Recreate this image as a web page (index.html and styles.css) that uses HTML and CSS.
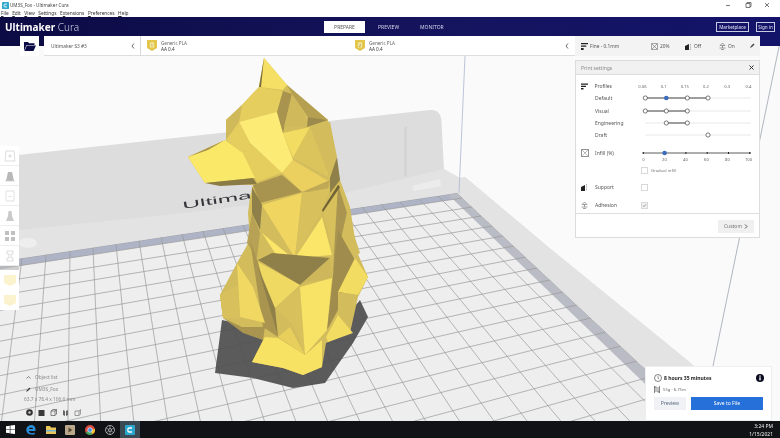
FILE: index.html
```html
<!DOCTYPE html>
<html lang="en">
<head>
<meta charset="utf-8">
<title>UM3S_Fox - Ultimaker Cura</title>
<link rel="stylesheet" href="styles.css">
</head>
<body>
<div class="page">
  <div class="titlebar">
    <svg class="app-ic" viewBox="0 0 8 8"><rect width="8" height="8" rx="1" fill="#2fa8c9"/><path d="M5.6 2.4H3.2Q2.3 2.4 2.3 4T3.2 5.6H5.6" fill="none" stroke="#fff" stroke-width="1.1"/></svg>
    <span class="title-text">UM3S_Fox - Ultimaker Cura</span>
    <div class="winctl">
      <svg viewBox="0 0 46 8" class="winctl-ic"><path d="M0 4.5H4M20 2.5H24V6.5H20ZM21 2.5V1.5H25V5.5H24M39 2L43 6M43 2L39 6" fill="none" stroke="#555" stroke-width=".8"/></svg>
    </div>
  </div>
  <div class="menubar">
    <span><u>F</u>ile</span><span><u>E</u>dit</span><span><u>V</u>iew</span><span><u>S</u>ettings</span><span>E<u>x</u>tensions</span><span><u>P</u>references</span><span><u>H</u>elp</span>
  </div>

  <div class="main">
    <svg class="scene" viewBox="0 17 780 404" preserveAspectRatio="none">
      <defs>
        <clipPath id="bedclip"><path d="M0 261.5L457 193L721 440L0 440Z"/></clipPath>
      </defs>
      <rect x="0" y="17" width="780" height="404" fill="#fafafa"/>
      <path d="M0 157L430 110Q441 109 441.500 122L444 170L460 178L465 177L547 246L687 360L780 440L0 440Z" fill="#dddddd"/>
      <path d="M0 232L185 213L345 193L444 169L460 178L465 177L547 246L687 360L780 440L0 440Z" fill="#e3e3e3"/>
      <path d="M404 127L407 127L407 176L404 176Z" fill="#d4d4d4"/>
      <path d="M412 186L440 179L441 186L414 191Z" fill="#ececec"/>
      <ellipse cx="28" cy="243" rx="9" ry="5" fill="#eeeeee"/>
      <text class="brand" x="183" y="209" textLength="104" lengthAdjust="spacingAndGlyphs" transform="rotate(-9 183 209)">Ultimaker</text>
      <path d="M0 261.500L457 193L721 440L0 440Z" fill="#eeeeee"/>
      <g clip-path="url(#bedclip)">
        <path d="M0 261.500L457 193L462 198L0 268.700Z" fill="#aeb4c6"/>
        <path d="M457 193L721 440L703.500 440L448 194.500Z" fill="#b9bcc4"/>
        <path fill="none" stroke="#9a9a9a" stroke-width=".7" d="M22 258L-.8 440M46 254.500L33.200 440M70 251L67.700 440M93 247.500L101.400 440M116 244L135.600 440M139 240.500L170.500 440M161 237L204.400 440M182 234L237.200 440M203 231L270.600 440M223 228L302.900 440M243 225L335.700 440M263 222L369 440M283 219L402.800 440M303 216L437.100 440M323 213L472 440M343 210L507.600 440M362 207L541.700 440M381 204L576.500 440M400 202L611.900 440M419 199L647.700 440M438 196L684 440M457 193L721 440"/>
        <path fill="none" stroke="#9a9a9a" stroke-width=".7" d="M0 261.500L457 193M0 268.700L462 198M0 282L472 207M0 295.300L481 216M0 310.400L492 226M0 325.700L503 236M0 341.200L514 246M0 358.400L526 257M0 375.700L537 268M0 395L550 280M0 414.600L563 292M0 436.100L577 305M0 458L591 318M0 482L606 332M0 506.500L621 346M0 533L637 361M0 560.300L653 376M0 589.900L670 392M0 622L688 409M0 655.300L707 426"/>
      </g>
      <path d="M465 56L459 193" fill="none" stroke="#a9b8d0" stroke-width=".8"/>
      <path d="M780 42L713 366" fill="none" stroke="#8f98a8" stroke-width=".7"/>
      <path d="M222 320L215 373L253 378L293 388L325 383L353 343L368 317L360 300L326 343Z" fill="#505050" fill-opacity=".93"/>
      <g class="dog">
        <path fill="#d2bc5c" d="M264 58L287 85L328 120L333 147L340 180L350 207L357 252L368 277L358 297L350 333L326 343L322 367L303 375L283 368L252 362L263 340L223 318L220 295L237 263L250 240L248 213L250 197L253 185L205 183L188 157L226 140L226 120L242 105L259 87Z"/>
        <path fill="#f5df64" d="M264 58L259 87L283 90L287 85Z"/>
        <path fill="#7a6c3c" d="M264 58L259 87L261 87Z"/>
        <path fill="#e6ce5e" d="M259 87L242 105L239 122L277 112L283 91Z"/>
        <path fill="#d0b95b" d="M242 105L226 120L226 140L239 122Z"/>
        <path fill="#fcec75" d="M239 122L277 112L283 133L293 160L282 173L250 143Z"/>
        <path fill="#e5cd5e" d="M226 140L239 122L250 143L282 173L257 182L243 153Z"/>
        <path fill="#fae868" d="M188 157L225 140L243 153L255 178L205 183Z"/>
        <path fill="#a8944f" d="M188 157L225 140L208 150Z"/>
        <path fill="#8a7a44" d="M205 183L253 178L257 184L220 186Z"/>
        <path fill="#a8944f" d="M283 91L277 112L283 133L292 94Z"/>
        <path fill="#d0b95b" d="M292 94L284 127L310 127L295 97Z"/>
        <path fill="#b5a052" d="M292 94L308 117L328 120L287 85Z"/>
        <path fill="#9c8a4c" d="M308 117L328 120L307 127Z"/>
        <path fill="#f3dc62" d="M283 133L310 127L293 158Z"/>
        <path fill="#d2bc5c" d="M310 127L330 122L337 157L330 175L306 153Z"/>
        <path fill="#dcc45d" d="M310 127L293 158L330 178Z"/>
        <path fill="#ebd060" d="M293 160L282 173L302 192L330 182Z"/>
        <path fill="#a8944f" d="M253 185L282 175L302 192L260 203Z"/>
        <path fill="#bfa957" d="M302 192L330 180L327 193Z"/>
        <path fill="#8f7f48" d="M330 178L337 157L340 180L330 193Z"/>
        <path fill="#f0d560" d="M262 205L302 193L295 258L263 232Z"/>
        <path fill="#d8c15c" d="M302 193L330 188L323 210L295 258Z"/>
        <path fill="#8f7f48" d="M252 187L262 205L260 230L252 213Z"/>
        <path fill="#d2bc5c" d="M262 233L262 205L295 258Z"/>
        <path fill="#fbe66a" d="M262 233L295 260L275 253Z"/>
        <path fill="#fbe66a" d="M322 217L332 255L295 258Z"/>
        <path fill="#d8c15c" d="M323 210L338 185L333 253Z"/>
        <path fill="#a9954f" d="M338 185L347 213L333 273Z"/>
        <path fill="#d2bc5c" d="M347 213L360 253L335 270Z"/>
        <path fill="#6f6236" d="M338 185L322 210L323 212L340 187Z"/>
        <path fill="#b6a155" d="M252 213L260 233L257 258L247 243Z"/>
        <path fill="#8f7f48" d="M258 260L272 253L330 258L300 285Z"/>
        <path fill="#f0d962" d="M258 262L300 285L275 308L262 298Z"/>
        <path fill="#cdb75a" d="M300 285L330 258L332 278L308 282Z"/>
        <path fill="#d8c15c" d="M275 308L300 287L305 353L292 323Z"/>
        <path fill="#f8e367" d="M300 287L332 278L327 330L305 355Z"/>
        <path fill="#a9954f" d="M250 240L258 262L278 337L263 327Z"/>
        <path fill="#8f7f48" d="M258 267L275 308L278 337Z"/>
        <path fill="#a08d4d" d="M338 230L355 260L338 310L327 330Z"/>
        <path fill="#f2dc62" d="M355 258L368 277L358 295L338 292Z"/>
        <path fill="#d2bc5c" d="M338 292L358 295L338 313Z"/>
        <path fill="#f2dc62" d="M338 315L353 333L328 342L326 337Z"/>
        <path fill="#d2bc5c" d="M240 263L220 295L223 318L265 337L240 318Z"/>
        <path fill="#f0d862" d="M237 263L253 287L265 323L240 317Z"/>
        <path fill="#d8c15c" d="M220 295L238 285L240 318L223 318Z"/>
        <path fill="#a9954f" d="M223 318L242 327L265 327L263 340L243 333Z"/>
        <path fill="#f7e264" d="M265 337L278 338L305 355L322 340L322 367L303 375L283 368L252 362Z"/>
        <path fill="#e8cf5c" d="M278 337L290 327L305 355Z"/>
      </g>
    </svg>

    <header class="topbar">
      <div class="logo"><b>Ultimaker</b> Cura</div>
      <nav class="tabs">
        <span class="tab tab-on">PREPARE</span>
        <span class="tab tab-preview">PREVIEW</span>
        <span class="tab tab-monitor">MONITOR</span>
      </nav>
      <div class="account">
        <span class="outline market">Marketplace</span>
        <span class="outline signin">Sign in</span>
      </div>
    </header>

    <div class="toolbar">
      <div class="folder">
        <svg viewBox="0 0 12 9" class="folder-ic"><path d="M0 0H4L5 1.200H10.500V3H2.500L0 9ZM2.800 3.500H12L9.500 9H.6Z" fill="#0d0b45"/></svg>
      </div>
      <div class="printer">
        <span>Ultimaker S3 #3</span>
        <svg viewBox="0 0 4 6" class="chev"><path d="M3 .5L1 3L3 5.500" fill="none" stroke="#444" stroke-width=".8"/></svg>
      </div>
      <div class="materials">
        <div class="mat">
          <svg viewBox="0 0 10 11" class="badge"><path d="M0 0H10V8L5 11L0 8Z" fill="#e3c64c"/><rect x="3" y="2.500" width="4" height="5" fill="#f6e9a8"/><text x="5" y="6.800" class="badge-n">1</text></svg>
          <div class="mat-text"><span>Generic PLA</span><span class="mat-nozzle">AA 0.4</span></div>
        </div>
        <div class="mat">
          <svg viewBox="0 0 10 11" class="badge"><path d="M0 0H10V8L5 11L0 8Z" fill="#e3c64c"/><rect x="3" y="2.500" width="4" height="5" fill="#f6e9a8"/><text x="5" y="6.800" class="badge-n">2</text></svg>
          <div class="mat-text"><span>Generic PLA</span><span class="mat-nozzle">AA 0.4</span></div>
        </div>
        <svg viewBox="0 0 4 6" class="chev mat-chev"><path d="M3 .5L1 3L3 5.500" fill="none" stroke="#444" stroke-width=".8"/></svg>
      </div>
      <div class="quick">
        <span class="q q-profile"><svg viewBox="0 0 8 8" class="q-ic"><path d="M0 0H8V1.500H0ZM0 2.800H6V4.300H0ZM0 5.600H3V8H0Z" fill="#222"/></svg>Fine - 0.1mm</span>
        <span class="q q-infill"><svg viewBox="0 0 7 7" class="q-ic"><path d="M.4.4H6.600V6.600H.4ZM1 1L6 6M6 1L1 6" fill="none" stroke="#666" stroke-width=".6"/></svg>20%</span>
        <span class="q q-support"><svg viewBox="0 0 7 7" class="q-ic"><path d="M0 7V3L4 1V7Z" fill="#222"/><path d="M5.500 1V7" stroke="#888" stroke-width=".7" stroke-dasharray="1 .7"/></svg>Off</span>
        <span class="q q-adhesion"><svg viewBox="0 0 7 7" class="q-ic"><path d="M3.500 0L6 2.500H1ZM3.500 2.500V5M.5 5H6.500M2 6.500H5" fill="none" stroke="#666" stroke-width=".6"/></svg>On</span>
        <svg viewBox="0 0 5 5" class="pen"><path d="M0 5L1 3L3.500 .5L4.500 1.500L2 4Z" fill="#444"/></svg>
      </div>
    </div>

    <div class="work">
      <div class="leftcol">
        <div class="tools">
          <div class="tool"><svg viewBox="0 0 12 12" class="tool-ic"><path d="M2 1H10L11 11H1ZM6 4V8M4 6H8" fill="none" stroke="#cfcfcf" stroke-width=".7"/></svg></div>
          <div class="tool"><svg viewBox="0 0 12 12" class="tool-ic"><path d="M4 2H8L10 11H2Z" fill="#b8b8b8"/><path d="M1 11H11" stroke="#ccc" stroke-width=".7"/></svg></div>
          <div class="tool"><svg viewBox="0 0 12 12" class="tool-ic"><path d="M2 1H10V11H2ZM4.500 6.500H7.500" fill="none" stroke="#d6d6d6" stroke-width=".7"/></svg></div>
          <div class="tool"><svg viewBox="0 0 12 12" class="tool-ic"><path d="M4.500 1H7.500L8 6L10 11H2L4 6Z" fill="#cacaca"/></svg></div>
          <div class="tool"><svg viewBox="0 0 12 12" class="tool-ic"><path d="M1 1H5V5H1ZM7 1H11V5H7ZM1 7H5V11H1ZM7 7H11V11H7Z" fill="#c0c0c0"/></svg></div>
          <div class="tool"><svg viewBox="0 0 12 12" class="tool-ic"><path d="M3 1H9V4H7V8H9V11H3V8H5V4H3Z" fill="none" stroke="#cfcfcf" stroke-width=".7"/></svg></div>
        </div>
        <div class="tool-sep"></div>
        <div class="tool tool-ex"><svg viewBox="0 0 12 12" class="tool-ic"><path d="M0 1H12V9L6 12L0 9Z" fill="#faf3cd"/></svg></div>
        <div class="tool tool-ex"><svg viewBox="0 0 12 12" class="tool-ic"><path d="M0 1H12V9L6 12L0 9Z" fill="#faf3cd"/></svg></div>

        <div class="objinfo">
          <div class="obj-row"><svg viewBox="0 0 5 3" class="obj-chev"><path d="M.5 2.500L2.500 .5L4.500 2.500" fill="none" stroke="#555" stroke-width=".7"/></svg><span>Object list</span></div>
          <div class="obj-row"><svg viewBox="0 0 5 5" class="obj-pen"><path d="M0 5L1 3L3.500 .5L4.500 1.500L2 4Z" fill="#444"/></svg><span>UM3S_Fox</span></div>
          <div class="obj-dim">63.7 x 78.4 x 106.6 mm</div>
          <div class="obj-icons">
            <svg viewBox="0 0 7 7" class="obj-ic"><circle cx="3.500" cy="3.500" r="3.300" fill="#333"/><circle cx="3.500" cy="3.500" r="1.200" fill="#ccc"/></svg>
            <svg viewBox="0 0 7 7" class="obj-ic"><rect x=".5" y="1" width="6" height="6" fill="#3a3a3a"/></svg>
            <svg viewBox="0 0 7 7" class="obj-ic"><path d="M1 2L3 .5H6.500V5L5 6.500H1ZM1 2H5V6.500M5 2L6.500 .5" fill="none" stroke="#555" stroke-width=".7"/></svg>
            <svg viewBox="0 0 7 7" class="obj-ic"><path d="M1 1L3 2V7L1 6ZM4 2L6 1V6L4 7Z" fill="#666"/></svg>
            <svg viewBox="0 0 7 7" class="obj-ic"><path d="M1 2H5V6.500H1ZM5 2L6.500 .5V5L5 6.500" fill="none" stroke="#777" stroke-width=".7"/></svg>
          </div>
        </div>
      </div>

      <div class="rightcol">
        <section class="settings">
          <div class="set-head"><span>Print settings</span><svg viewBox="0 0 5 5" class="set-x"><path d="M.5.5L4.500 4.500M4.500.5L.5 4.500" stroke="#333" stroke-width="1"/></svg></div>
          <div class="set-body">
            <div class="row">
              <span class="slot"><svg viewBox="0 0 7 6" class="slot-ic"><path d="M0 0H7V1.200H0ZM0 2.300H5V3.500H0ZM0 4.500H2.500V6H0Z" fill="#222"/></svg></span>
              <span class="lbl">Profiles</span>
              <div class="scale scale-p"><span>0.06</span><span>0.1</span><span>0.15</span><span>0.2</span><span>0.3</span><span>0.4</span></div>
            </div>
            <div class="row"><span class="slot"></span><span class="lbl">Default</span>
              <svg class="slider" viewBox="0 0 113 10"><path d="M4.300 5H110" class="rail"/><path d="M4.300 5H67" class="act"/><circle cx="4.300" cy="5" r="2.100" class="dot"/><circle cx="25.300" cy="5" r="2.300" class="dot-on"/><circle cx="46.300" cy="5" r="2.100" class="dot"/><circle cx="67" cy="5" r="2.100" class="dot"/></svg></div>
            <div class="row"><span class="slot"></span><span class="lbl">Visual</span>
              <svg class="slider" viewBox="0 0 113 10"><path d="M4.300 5H110" class="rail"/><path d="M4.300 5H46.300" class="act"/><circle cx="4.300" cy="5" r="2.100" class="dot"/><circle cx="25.300" cy="5" r="2.100" class="dot"/><circle cx="46.300" cy="5" r="2.100" class="dot"/></svg></div>
            <div class="row"><span class="slot"></span><span class="lbl">Engineering</span>
              <svg class="slider" viewBox="0 0 113 10"><path d="M4.300 5H110" class="rail"/><path d="M25.300 5H46.300" class="act"/><circle cx="25.300" cy="5" r="2.100" class="dot"/><circle cx="46.300" cy="5" r="2.100" class="dot"/></svg></div>
            <div class="row"><span class="slot"></span><span class="lbl">Draft</span>
              <svg class="slider" viewBox="0 0 113 10"><path d="M4.300 5H110" class="rail"/><circle cx="67" cy="5" r="2.100" class="dot"/></svg></div>

            <div class="row row-infill">
              <span class="slot"><svg viewBox="0 0 8 8" class="slot-ic slot-ic-lg"><path d="M.4.4H7.600V7.600H.4Z" fill="none" stroke="#555" stroke-width=".7"/><path d="M1 1L7 7M7 1L1 7" stroke="#555" stroke-width=".6" stroke-dasharray="1 .6"/></svg></span>
              <span class="lbl">Infill (%)</span>
              <svg class="slider" viewBox="0 0 113 10"><path d="M1.500 5H110" stroke="#333" stroke-width=".8"/><path d="M2.300 4V6M23.600 4V6M44.900 4V6M66.200 4V6M87.500 4V6M108.800 4V6" stroke="#111" stroke-width=".9"/><circle cx="23.600" cy="5" r="2.300" class="dot-on"/></svg>
            </div>
            <div class="scale scale-i"><span>0</span><span>20</span><span>40</span><span>60</span><span>80</span><span>100</span></div>
            <div class="gradual"><span class="check"></span><span class="grad-lbl">Gradual infill</span></div>
            <div class="row row-support">
              <span class="slot"><svg viewBox="0 0 7 7" class="slot-ic"><path d="M0 7V3L4 1V7Z" fill="#222"/><path d="M5.500 0V7" stroke="#888" stroke-width=".7" stroke-dasharray="1 .7"/></svg></span>
              <span class="lbl">Support</span><span class="check"></span>
            </div>
            <div class="row row-adhesion">
              <span class="slot"><svg viewBox="0 0 7 7" class="slot-ic"><path d="M3.500 0L6 2.500H1ZM3.500 2.500V5M.5 5H6.500M2 6.500H5" fill="none" stroke="#666" stroke-width=".6"/></svg></span>
              <span class="lbl">Adhesion</span><span class="check check-on"><svg viewBox="0 0 5 5" class="tick"><path d="M1 2.500L2 3.700L4 1.300" fill="none" stroke="#777" stroke-width=".7"/></svg></span>
            </div>
          </div>
          <div class="set-foot"><span class="custom">Custom<svg viewBox="0 0 4 5" class="custom-ch"><path d="M1 .5L3 2.500L1 4.500" fill="none" stroke="#444" stroke-width=".9"/></svg></span></div>
        </section>

        <section class="printinfo">
          <div class="time">
            <svg viewBox="0 0 8 8" class="clock"><circle cx="4" cy="4" r="3.500" fill="none" stroke="#333" stroke-width=".6"/><path d="M4 1.800V4.300L5.200 5" fill="none" stroke="#333" stroke-width=".5"/></svg>
            <b>8 hours 35 minutes</b>
            <svg viewBox="0 0 8 8" class="info-i"><circle cx="4" cy="4" r="4" fill="#0a0a20"/><rect x="3.300" y="3.300" width="1.400" height="3" fill="#fff"/><rect x="3.300" y="1.500" width="1.400" height="1.200" fill="#fff"/></svg>
          </div>
          <div class="usage">
            <svg viewBox="0 0 6 7" class="spool"><path d="M.5 0V7M2 1V6M4 1V6M5.500 0V7M0 1H2.500M3.500 6H6" stroke="#555" stroke-width=".7" fill="none"/></svg>
            <span>55g · 6.75m</span>
          </div>
          <div class="actions">
            <span class="btn-prev">Preview</span>
            <span class="btn-save">Save to File</span>
          </div>
        </section>
      </div>
    </div>
  </div>

  <footer class="taskbar">
    <svg viewBox="0 0 9 9" class="tb tb-start"><path d="M0 1.300L3.800.7V4.200H0ZM4.400.6L9 0V4.200H4.400ZM0 4.800H3.800V8.300L0 7.700ZM4.400 4.800H9V9L4.400 8.400Z" fill="#fff"/></svg>
    <svg viewBox="0 0 10 10" class="tb tb-edge"><path d="M9.500 6H2.800C3 8 6 8.800 8.800 7.500V9.300C5 10.500.3 9 .3 5C.3 1.500 3 0 5.500 0C8 0 10 2 9.500 6ZM3 4H7C7 2.300 3.300 2.300 3 4Z" fill="#2a8bd6"/></svg>
    <svg viewBox="0 0 10 10" class="tb"><path d="M0 1H4L5 2.500H10V9H0Z" fill="#e9c65c"/><rect y="5" width="10" height="1.400" fill="#6fb2d8"/></svg>
    <svg viewBox="0 0 10 10" class="tb"><rect width="10" height="10" rx="1" fill="#b9a88a"/><path d="M3.500 2.500L7.500 5L3.500 7.500Z" fill="#5a4636"/></svg>
    <svg viewBox="0 0 10 10" class="tb"><circle cx="5" cy="5" r="5" fill="#dd4b3e"/><path d="M5 5L.7 7.500A5 5 0 0 0 7.500 9.300Z" fill="#3ba55a"/><path d="M5 5L9.900 4A5 5 0 0 1 7.500 9.300Z" fill="#f2c531"/><circle cx="5" cy="5" r="2.300" fill="#4a8fe0" stroke="#fff" stroke-width=".6"/></svg>
    <svg viewBox="0 0 10 10" class="tb"><circle cx="5" cy="5" r="4.500" fill="none" stroke="#ddd" stroke-width=".7"/><circle cx="5" cy="5" r="1.500" fill="none" stroke="#ddd" stroke-width=".7"/><path d="M5 .5V3.500M1 3L3.600 4.400M1.300 7.700L3.800 6M8.700 7.700L6.200 6M9 3L6.400 4.400M5 6.500V9.500" stroke="#ddd" stroke-width=".5"/></svg>
    <span class="tb-active"><svg viewBox="0 0 10 10" class="tb-cura"><rect width="10" height="10" rx="1" fill="#2aa6cc"/><path d="M7 3H4Q2.800 3 2.800 5T4 7H7" fill="none" stroke="#fff" stroke-width="1.300"/></svg></span>
    <div class="clocktext"><span>3:24 PM</span><span>1/15/2021</span></div>
  </footer>
</div>
</body>
</html>
```

FILE: styles.css
```css
* { box-sizing: border-box; }
html, body { margin: 0; padding: 0; }
body { font-family: "Noto Sans", "Open Sans", sans-serif; font-size: 5px; color: #555; background: #fff; overflow: hidden; }
.page { width: 780px; height: 438px; display: flex; flex-direction: column; overflow: hidden; filter: blur(.3px); }

.titlebar { height: 9px; display: flex; align-items: center; background: #fff; padding: 1px 0 0 2px; }
.app-ic { width: 7px; height: 7px; }
.title-text { margin-left: 1px; font-size: 4.6px; color: #444; }
.winctl { margin-left: auto; padding-right: 8px; }
.winctl-ic { display: block; width: 46px; height: 8px; }
.menubar { height: 8px; display: flex; gap: 3.5px; align-items: center; padding-left: 1px; font-size: 4.8px; color: #333; background: #fff; }

.main { flex: 1; position: relative; display: flex; flex-direction: column; min-height: 0; }
.scene { position: absolute; left: 0; top: 0; width: 780px; height: 404px; }
.brand { font-family: "Liberation Sans", sans-serif; font-size: 10px; fill: #34343a; }

.topbar { position: relative; height: 29px; flex: none; display: flex; align-items: flex-start; padding-top: 4px; background: linear-gradient(90deg, #0c0b44, #15145f 60%, #13136a); color: #fff; }
.logo { width: 324px; padding-left: 5px; font-size: 10px; line-height: 12px; font-weight: 300; color: #d5d6ea; }
.logo b { font-weight: 700; color: #fff; }
.tabs { display: flex; align-items: center; height: 12px; }
.tab { font-size: 5px; height: 12px; line-height: 12px; text-align: center; color: #d5d6ee; }
.tab-on { width: 41px; background: #fff; color: #555; }
.tab-preview { margin-left: 13px; }
.tab-monitor { margin-left: 21px; }
.account { margin-left: auto; display: flex; padding: 1px 5px 0 0; gap: 7px; }
.outline { display: block; height: 10px; line-height: 9px; border: .6px solid #c9cbe0; font-size: 4.6px; color: #e4e5f2; text-align: center; }
.market { width: 33px; }
.signin { width: 19px; }

.toolbar { position: relative; height: 20px; flex: none; margin: -10px 20px 0; display: flex; font-size: 4.8px; }
.folder { width: 19px; background: #fff; display: flex; align-items: center; justify-content: center; }
.folder-ic { width: 12px; height: 9px; }
.printer { margin-left: 5px; width: 97px; background: #fff; display: flex; align-items: center; padding: 0 5px 0 7px; justify-content: space-between; border-bottom: 1px solid #ddd; border-right: 1px solid #d8d8d8; }
.chev { width: 4px; height: 6px; }
.materials { width: 434px; background: #fff; border-bottom: 1px solid #ddd; display: flex; align-items: center; padding-left: 6px; position: relative; }
.mat { width: 208px; display: flex; align-items: center; gap: 4px; }
.badge { width: 10px; height: 11px; }
.badge-n { font-size: 4px; text-anchor: middle; fill: #8a6d10; }
.mat-text { display: flex; flex-direction: column; line-height: 6px; font-size: 4.6px; color: #666; }
.mat-nozzle { color: #333; }
.mat-chev { position: absolute; right: 6px; top: 7px; }
.quick { width: 185px; background: #f3f3f3; position: relative; color: #555; }
.q { position: absolute; top: 0; height: 20px; display: flex; align-items: center; gap: 2px; }
.q-ic { width: 7px; height: 7px; }
.q-profile { left: 6px; }
.q-infill { left: 76px; }
.q-support { left: 110px; }
.q-adhesion { left: 144px; }
.pen { position: absolute; left: 175px; top: 7px; width: 5px; height: 5px; }

.work { flex: 1; display: flex; min-height: 0; position: relative; justify-content: space-between; }
.leftcol { display: flex; flex-direction: column; padding-top: 90px; }
.tools { width: 19px; background: #fff; }
.tool { width: 19px; height: 20px; display: flex; align-items: center; justify-content: center; background: #fff; border-bottom: .6px solid #eee; }
.tool-ic { width: 12px; height: 12px; }
.tool-sep { width: 19px; height: 4px; background: #bbb; opacity: .6; }
.tool-ex { border: 0; }
.objinfo { margin-top: auto; margin-left: 24px; margin-bottom: 5px; color: #8a8a8a; font-size: 4.8px; }
.obj-row { display: flex; align-items: center; height: 12px; padding-left: 2px; gap: 4px; }
.obj-chev { width: 5px; height: 3px; }
.obj-pen { width: 5px; height: 5px; }
.obj-dim { height: 9px; line-height: 9px; }
.obj-icons { margin-top: 5px; display: flex; gap: 5px; padding-left: 2px; }
.obj-ic { width: 7px; height: 7px; }

.rightcol { width: 205px; display: flex; flex-direction: column; }
.settings { width: 185px; height: 178px; margin-top: 4px; background: #fff; border: .7px solid #dcdcdc; display: flex; flex-direction: column; font-size: 5px; }
.set-head { height: 14px; background: #f1f1f1; border-bottom: .7px solid #ddd; display: flex; align-items: center; justify-content: space-between; padding: 0 5px; color: #8a8a8a; }
.set-x { width: 5px; height: 5px; }
.set-body { flex: 1; padding-top: 5px; }
.row { display: flex; align-items: center; height: 12.3px; }
.slot { width: 19px; padding-left: 5px; display: flex; align-items: center; }
.slot-ic { width: 7px; height: 7px; }
.slot-ic-lg { width: 8px; height: 8px; }
.lbl { width: 46px; color: #555; }
.slider { width: 113px; height: 10px; }
.rail { stroke: #e2e2e2; stroke-width: .8; fill: none; }
.act { stroke: #333; stroke-width: .9; fill: none; }
.dot { fill: #fff; stroke: #444; stroke-width: .7; }
.dot-on { fill: #3c6cc0; }
.scale { display: flex; font-size: 4.2px; color: #666; }
.scale span { width: 21.2px; text-align: center; }
.scale-p { margin-left: -6.500px; }
.scale-i { margin-left: 57px; height: 6px; line-height: 6px; margin-top: -2px; }
.row-infill { margin-top: 5.500px; }
.gradual { display: flex; align-items: center; margin: 3.500px 0 0 65px; gap: 3px; }
.grad-lbl { font-size: 4.2px; color: #777; }
.check { display: block; width: 7px; height: 7px; border: .7px solid #d8d8d8; background: #fff; }
.check-on { background: #f2f2f2; }
.tick { display: block; width: 100%; height: 100%; }
.row-support { margin-top: 7.500px; }
.row-adhesion { margin-top: 5.500px; }
.set-foot { height: 24px; border-top: .7px solid #ddd; display: flex; justify-content: flex-end; align-items: flex-start; padding: 5.500px 5px 0 0; }
.custom { width: 36px; height: 13px; background: #f0f0f0; display: flex; align-items: center; justify-content: center; gap: 2px; color: #777; }
.custom-ch { width: 4px; height: 5px; }

.printinfo { margin: auto 8px 0 70px; height: 55px; background: #fff; border: .6px solid #eee; padding: 6px 8px 0 8px; }
.time { display: flex; align-items: center; height: 9px; color: #222; font-size: 5px; gap: 2px; }
.time b { font-weight: 700; }
.clock { width: 8px; height: 8px; }
.info-i { width: 8px; height: 8px; margin-left: auto; margin-right: -1px; }
.usage { display: flex; align-items: center; height: 8px; margin-top: 3px; gap: 3px; font-size: 4.2px; color: #666; }
.spool { width: 6px; height: 7px; }
.actions { display: flex; margin-top: 4px; gap: 5px; }
.btn-prev { width: 32px; height: 13px; line-height: 13px; background: #f0f2f5; text-align: center; color: #5a6a80; }
.btn-save { width: 73px; height: 13px; line-height: 13px; background: #2671d9; text-align: center; color: #fff; }

.taskbar { height: 17px; flex: none; background: #101216; display: flex; align-items: center; padding-left: 6px; color: #fff; }
.tb { width: 10px; height: 10px; margin-left: 9.700px; flex: none; }
.tb-start { margin-left: 0; width: 9px; height: 9px; }
.tb-edge { margin-left: 11px; }
.tb-active { width: 20px; height: 17px; margin-left: 5.200px; background: #3a4a55; display: flex; align-items: center; justify-content: center; }
.tb-cura { width: 10px; height: 10px; }
.clocktext { margin-left: auto; padding-right: 7px; display: flex; flex-direction: column; align-items: flex-end; line-height: 8px; font-size: 5px; color: #eee; }
```
